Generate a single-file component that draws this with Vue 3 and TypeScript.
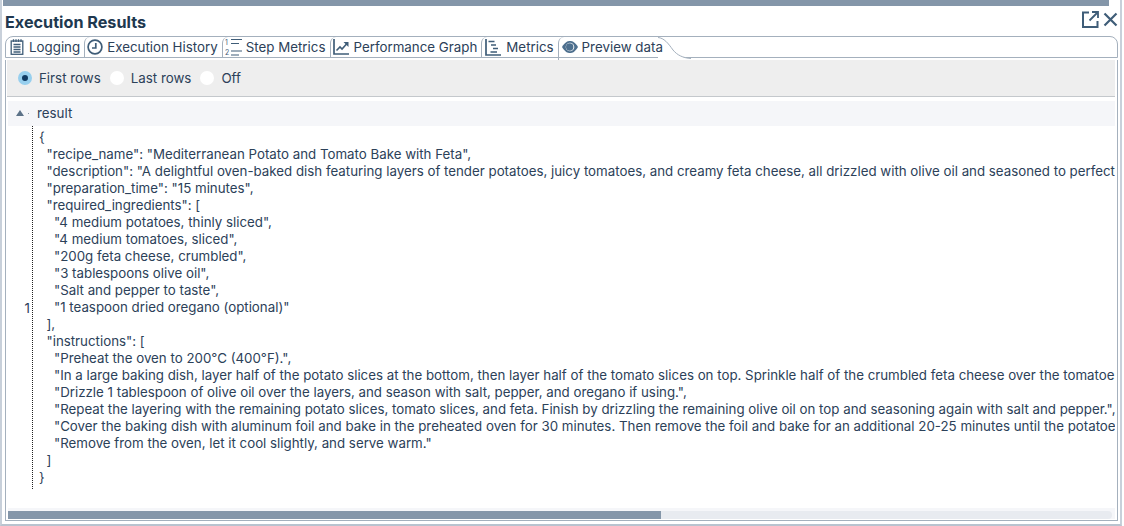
<script setup lang="ts">
const tabs = ['Logging', 'Execution History', 'Step Metrics', 'Performance Graph', 'Metrics', 'Preview data']
const json = `{
  "recipe_name": "Mediterranean Potato and Tomato Bake with Feta",
  "description": "A delightful oven-baked dish featuring layers of tender potatoes, juicy tomatoes, and creamy feta cheese, all drizzled with olive oil and seasoned to perfection.",
  "preparation_time": "15 minutes",
  "required_ingredients": [
    "4 medium potatoes, thinly sliced",
    "4 medium tomatoes, sliced",
    "200g feta cheese, crumbled",
    "3 tablespoons olive oil",
    "Salt and pepper to taste",
    "1 teaspoon dried oregano (optional)"
  ],
  "instructions": [
    "Preheat the oven to 200°C (400°F).",
    "In a large baking dish, layer half of the potato slices at the bottom, then layer half of the tomato slices on top. Sprinkle half of the crumbled feta cheese over the tomatoes.",
    "Drizzle 1 tablespoon of olive oil over the layers, and season with salt, pepper, and oregano if using.",
    "Repeat the layering with the remaining potato slices, tomato slices, and feta. Finish by drizzling the remaining olive oil on top and seasoning again with salt and pepper.",
    "Cover the baking dish with aluminum foil and bake in the preheated oven for 30 minutes. Then remove the foil and bake for an additional 20-25 minutes until the potatoes are tender.",
    "Remove from the oven, let it cool slightly, and serve warm."
  ]
}`
</script>

<template>
  <div class="window">
    <div class="topbar"></div>
    <header class="head">
      <h1>Execution Results</h1>
      <div class="actions">
        <svg width="17" height="17" viewBox="0 0 17 17" fill="none" stroke="#3f5d78" stroke-width="2">
          <path d="M7 1.500H1V16H15.500V10" />
          <path d="M7.500 9.500L15 2M10 1H16V7" stroke-width="1.800" />
        </svg>
        <svg width="15" height="15" viewBox="0 0 15 15" fill="none" stroke="#3f5d78" stroke-width="2.200">
          <path d="M1.500 1.500L13.500 13.500M13.500 1.500L1.500 13.500" />
        </svg>
      </div>
    </header>

    <nav class="tabs">
      <div v-for="(t, i) in tabs" :key="t" class="tab" :class="['tab-' + i, { active: i === 5 }]">
        <svg v-if="i === 0" class="ico" width="14" height="16" viewBox="0 0 14 16" fill="none" stroke="#3f5d78" stroke-width="1.300">
          <rect x="1.200" y="2" width="11.600" height="13.300" />
          <path d="M3.500 5.500H10.500M3.500 8H10.500M3.500 10.500H10.500M3.500 13H10.500M3.500 .3V3M6 .3V3M8.500 .3V3M11 .3V3" />
        </svg>
        <svg v-else-if="i === 1" class="ico" width="16" height="16" viewBox="0 0 16 16" fill="none" stroke="#3f5d78" stroke-width="1.700">
          <circle cx="8" cy="8" r="6.900" />
          <path d="M8.800 4V9H5" />
        </svg>
        <svg v-else-if="i === 2" class="ico" width="18" height="18" viewBox="0 0 18 18" fill="none" stroke="#3f5d78" stroke-width="1.200">
          <path d="M6 1.500H17M6 5.500H14M6 13H17M6 17H14" />
          <text x="0" y="7" class="mini">1</text>
          <text x="0" y="17" class="mini">2</text>
        </svg>
        <svg v-else-if="i === 3" class="ico" width="16" height="16" viewBox="0 0 16 16" fill="none" stroke="#3f5d78" stroke-width="1.700">
          <path d="M1 0V15H16" />
          <path d="M3.500 11.500L7 8L9 10L14 4.500" stroke-width="1.600" />
          <path d="M10.500 3H15.500V8Z" fill="#3f5d78" stroke="none" />
        </svg>
        <svg v-else-if="i === 4" class="ico" width="16" height="17" viewBox="0 0 16 17" fill="none" stroke="#3f5d78" stroke-width="1.700">
          <path d="M1 0V16H16" />
          <path d="M3.500 2.500H9.500M6 6H11M8 9.500H13M5.500 13H12" />
        </svg>
        <svg v-else class="ico" width="16" height="12" viewBox="0 0 16 12">
          <path d="M0 6C3 1 5.500 0 8 0S13 1 16 6C13 11 10.500 12 8 12S3 11 0 6Z" fill="#4d6f8e" />
          <circle cx="8" cy="6" r="4.300" fill="#fff" />
          <circle cx="7.700" cy="6" r="3.700" fill="#4d6f8e" />
        </svg>
        <span>{{ t }}</span>
      </div>
      <div class="tab-curve">
        <svg width="33" height="25" viewBox="0 0 33 25" fill="none">
          <path d="M0 25V0C6 1 10 6 15 13C19 18 25 21 33 21.500V25H0Z" fill="#fff" />
          <path d="M0 .5C6 1 10 6 15 13C19 18 25 21 33 21.500" stroke="#a4b0bd" />
        </svg>
      </div>
    </nav>

    <section class="panel">
      <div class="options">
        <label class="radio on"><i></i>First rows</label>
        <label class="radio"><i></i>Last rows</label>
        <label class="radio"><i></i>Off</label>
      </div>
      <div class="group">
        <svg width="8" height="6" viewBox="0 0 8 6"><path d="M4 0L8 6H0Z" fill="#5c7288" /></svg>
        <b class="dot"></b>
        <span>result</span>
      </div>
      <div class="table">
        <div class="rownum">1</div>
        <pre class="code">{{ json }}</pre>
      </div>
      <div class="scroll-wrap"><div class="scroll"><div class="thumb"></div></div></div>
    </section>
  </div>
</template>

<style>
html, body { margin: 0; background: #fff; }
</style>

<style scoped>
.window {
  width: 1122px;
  height: 526px;
  box-sizing: border-box;
  display: flex;
  flex-direction: column;
  overflow: hidden;
  background: #fff;
  border-left: 2px solid #c8d0da;
  border-right: 2px solid #c8d0da;
  border-bottom: 2px solid #b9c3cf;
  font-family: "Inter", "Liberation Sans", sans-serif;
  color: #2c4159;
}
.topbar { height: 6px; flex: none; margin: 0 11px 0 1px; background: #8496a9; }
.head {
  height: 30px;
  flex: none;
  display: flex;
  align-items: center;
  justify-content: space-between;
  padding: 0 2px 0 3px;
}
h1 { margin: 1px 0 0; font-size: 16.2px; font-weight: 700; color: #20384f; }
.actions { display: flex; align-items: center; gap: 4px; margin-top: -4px; }
.tabs {
  height: 22px;
  flex: none;
  display: flex;
  margin: 0 2px 0 3px;
  box-sizing: border-box;
  border: 1px solid #a4b0bd;
  border-radius: 8px 8px 0 0;
}
.tab {
  display: flex;
  align-items: center;
  gap: 4px;
  padding: 0 4px 0 2px;
  font-size: 13.33px;
  border-left: 1px solid #a4b0bd;
  border-radius: 6px 0 0 0;
  white-space: nowrap;
}
.tab-0 { border-left: 0; padding-left: 4px; gap: 5px; }
.tab-2 { gap: 3px; padding-right: 5px; }
.tab-4 { padding-left: 3px; gap: 5px; }
.tab.active {
  background: #fff;
  margin-bottom: -3px;
  padding: 0 0 3px 3px;
  position: relative;
  z-index: 1;
  background: transparent;
}
.tab-curve { height: 25px; margin-left: -5px; margin-bottom: -3px; }
.tab-curve svg { display: block; }
.ico { flex: none; }
.mini { font-size: 7px; fill: #3f5d78; stroke: none; font-family: "Inter", sans-serif; }
.panel {
  flex: 1;
  min-height: 0;
  display: flex;
  flex-direction: column;
  margin: 2px 2px 3px 3px;
  padding: 0 2px 1px 2px;
  border-left: 1px solid #a4b0bd;
  border-right: 1px solid #a4b0bd;
  border-bottom: 1px solid #a4b0bd;
}
.options {
  height: 36px;
  flex: none;
  margin: 0 0 0 -1px;
  padding: 0 0 0 11px;
  display: flex;
  align-items: center;
  gap: 9px;
  background: #eeeeee;
  border-bottom: 1px solid #c4c8cc;
  font-size: 13.33px;
}
.radio { display: flex; align-items: center; gap: 7px; }
.radio i {
  width: 14px;
  height: 14px;
  border-radius: 50%;
  background: #fff;
  box-sizing: border-box;
  display: block;
}
.radio.on i {
  background: #0f3a63;
  border: 4px solid #97cfee;
}
.group {
  height: 25px;
  flex: none;
  margin-top: 4px;
  box-sizing: border-box;
  padding: 0 0 1px 8px;
  display: flex;
  align-items: center;
  font-size: 13.33px;
  background: #f5f6f9;
}
.dot { width: 1px; height: 1px; margin: 0 8px 0 4px; background: #8d99a6; }
.table {
  flex: 1;
  min-height: 0;
  display: flex;
  overflow: hidden;
}
.rownum {
  width: 25px;
  flex: none;
  height: 363px;
  box-sizing: border-box;
  display: flex;
  align-items: center;
  justify-content: flex-end;
  padding-right: 2px;
  font-size: 13.33px;
  border-right: 1px dotted #222;
}
.code {
  margin: 0;
  padding: 3px 0 0 6px;
  font-family: "Inter", "Liberation Sans", sans-serif;
  font-size: 13.3px;
  line-height: 17px;
  white-space: pre;
  color: #2c4159;
}
.scroll-wrap { flex: none; padding: 3px 0 0; background: #f5f6f9; }
.scroll {
  height: 8px;
  box-sizing: border-box;
  margin-right: 3px;
  background: #e8ebf0;
  border-radius: 0 4px 4px 0;
}
.thumb { width: 653px; height: 100%; background: #8496a9; }
</style>
